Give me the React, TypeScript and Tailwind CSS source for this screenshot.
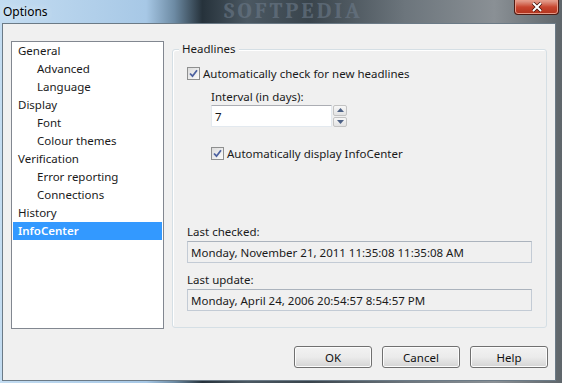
import React from 'react';

const font = { fontFamily: '"Noto Sans", "Segoe UI", sans-serif' };

const tree: { label: string; child?: boolean; selected?: boolean }[] = [
  { label: 'General' },
  { label: 'Advanced', child: true },
  { label: 'Language', child: true },
  { label: 'Display' },
  { label: 'Font', child: true },
  { label: 'Colour themes', child: true },
  { label: 'Verification' },
  { label: 'Error reporting', child: true },
  { label: 'Connections', child: true },
  { label: 'History' },
  { label: 'InfoCenter', selected: true },
];

function CheckBox() {
  return (
    <span className="flex h-[13px] w-[13px] shrink-0 items-center justify-center border border-[#8e8f8f] bg-gradient-to-br from-[#dcdcdc] to-[#fbfbfb]">
      <svg width="9" height="9" viewBox="0 0 9 9">
        <path d="M1 4.5 L3.5 7.2 L8 1.2" fill="none" stroke="#4c61a0" strokeWidth="1.8" />
      </svg>
    </span>
  );
}

function Button({ label }: { label: string }) {
  return (
    <button className="h-[22px] w-[78px] rounded-[3px] border border-[#707070] bg-gradient-to-b from-[#f2f2f2] via-[#ebebeb] to-[#d4d4d4] text-[11.5px] text-[#111] shadow-[inset_0_0_0_1px_#fcfcfc]">
      {label}
    </button>
  );
}

function ReadField({ value }: { value: string }) {
  return (
    <div className="flex h-[22px] items-center border border-[#c3cbd5] border-t-[#abb3bd] bg-[#f0f0f0] pl-[3px] text-[#1a1a1a]">
      {value}
    </div>
  );
}

export default function App() {
  return (
    <div
      className="flex h-[383px] w-[562px] flex-col overflow-hidden bg-[linear-gradient(90deg,#c3dcf1_0%,#a7c8e6_26%,#6d8ba4_31%,#26323b_36%,#4b5862_44%,#39444c_55%,#6c757c_72%,#8a9095_88%,#5f666b_100%)] text-[11.5px] leading-[15px]"
      style={font}
    >
      <div className="relative flex h-[23px] shrink-0 items-center justify-between pl-[3px]">
        <span className="text-[12px] text-black [text-shadow:0_0_6px_#e8f2fb]">Options</span>
        <span className="pointer-events-none absolute left-[224px] top-[0px] font-serif text-[22px] font-bold leading-[22px] tracking-[3px] text-[#6b7988] opacity-60">
          SOFTPEDIA
        </span>
        <div className="mr-[3px] flex h-[15px] w-[45px] items-center justify-center self-start rounded-b-[4px] border border-t-0 border-[#4d1a12] bg-gradient-to-b from-[#e3a597] via-[#c8452f] to-[#b0321c] shadow-[inset_0_0_0_1px_#e69a88]">
          <svg width="12" height="10" viewBox="0 0 12 10">
            <path d="M2 1 L10 9 M10 1 L2 9" stroke="#3a0f08" strokeWidth="3.4" />
            <path d="M2 1 L10 9 M10 1 L2 9" stroke="#ffffff" strokeWidth="2" />
          </svg>
        </div>
      </div>

      <div className="ml-[2px] mr-[6px] flex h-[358px] flex-col border border-[#6b7a86] bg-[#f0f0f0] pl-[8px] pr-[7px] pt-[17px]">
        <div className="flex h-[288px] gap-[8px]">
          <div className="w-[153px] shrink-0 border border-[#828790] bg-white p-[1px] pt-0">
            {tree.map((t) => (
              <div
                key={t.label}
                className={
                  'flex h-[18px] items-center pb-[1px] ' +
                  (t.child ? 'pl-[24px] ' : 'pl-[5px] ') +
                  (t.selected ? 'bg-[#3399ff] font-semibold text-white' : 'text-[#1a1a1a]')
                }
              >
                {t.label}
              </div>
            ))}
          </div>

          <div className="relative mt-[8px] flex h-[279px] w-[375px] flex-col rounded-[3px] border border-[#d5dfe5] px-[14px] pt-[16px] shadow-[inset_1px_1px_0_#fff]">
            <span className="absolute left-[6px] top-[-9px] bg-[#f0f0f0] px-[3px] text-[#1a1a1a]">Headlines</span>

            <label className="flex items-center gap-[3px] text-[#1a1a1a]">
              <CheckBox />
              <span>Automatically check for new headlines</span>
            </label>

            <div className="ml-[24px] mt-[8px] text-[#1a1a1a]">Interval (in days):</div>
            <div className="ml-[24px] mt-[1px] flex h-[22px] items-stretch">
              <div className="flex w-[121px] items-center border border-[#e3e9ef] border-t-[#abadb3] bg-white pl-[3px] text-[#1a1a1a]">
                7
              </div>
              <div className="ml-[1px] flex w-[14px] flex-col gap-[1px]">
                <div className="flex flex-1 items-center justify-center rounded-[2px] border border-[#c3c3c3] bg-gradient-to-b from-[#f7f7f7] to-[#e3e3e3]">
                  <svg width="7" height="4" viewBox="0 0 7 4"><path d="M0 4 L3.5 0 L7 4 Z" fill="#4d6185" /></svg>
                </div>
                <div className="flex flex-1 items-center justify-center rounded-[2px] border border-[#c3c3c3] bg-gradient-to-b from-[#f7f7f7] to-[#e3e3e3]">
                  <svg width="7" height="4" viewBox="0 0 7 4"><path d="M0 0 L3.5 4 L7 0 Z" fill="#4d6185" /></svg>
                </div>
              </div>
            </div>

            <label className="ml-[24px] mt-[19px] flex items-center gap-[3px] text-[#1a1a1a]">
              <CheckBox />
              <span>Automatically display InfoCenter</span>
            </label>

            <div className="mt-[63px] text-[#1a1a1a]">Last checked:</div>
            <div className="mt-[2px]">
              <ReadField value="Monday, November 21, 2011 11:35:08 11:35:08 AM" />
            </div>
            <div className="mt-[9px] text-[#1a1a1a]">Last update:</div>
            <div className="mt-[2px]">
              <ReadField value="Monday, April 24, 2006 20:54:57 8:54:57 PM" />
            </div>
          </div>
        </div>

        <div className="mt-[17px] flex justify-end gap-[10px]">
          <Button label="OK" />
          <Button label="Cancel" />
          <Button label="Help" />
        </div>
      </div>
    </div>
  );
}
